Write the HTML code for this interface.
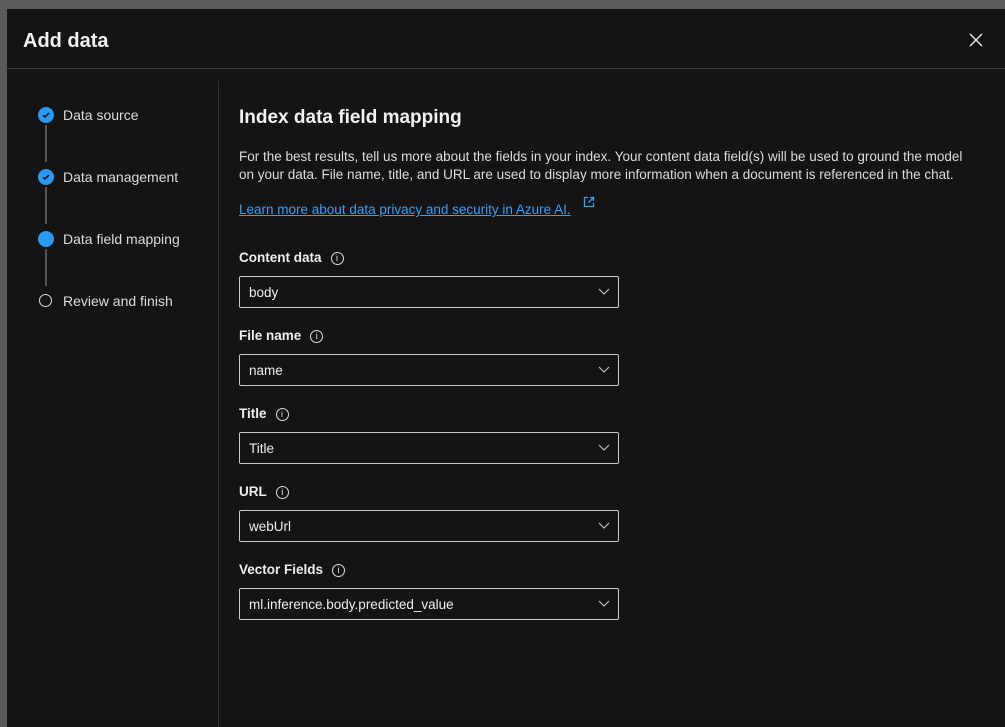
<!DOCTYPE html>
<html><head><meta charset="utf-8"><style>
*{box-sizing:border-box;margin:0;padding:0}
html,body{width:1005px;height:727px;overflow:hidden}
body{background:#5a5a5a;font-family:"Liberation Sans",sans-serif;color:#e6e6e6;position:relative}
.top{position:absolute;left:0;top:0;width:1005px;height:9px;background:#5c5c5c}
.modal{position:absolute;left:7px;top:9px;width:998px;height:730px;background:#141414}
.abs{position:absolute}
.title{left:16px;top:21px;font-size:20px;font-weight:bold;color:#f2f2f2}
.hdiv{left:0;top:59px;width:998px;height:1px;background:#3b3b3b}
.vdiv{left:211px;top:72px;width:1px;height:660px;background:#333}
.step{font-size:14px;color:#dcdcdc;left:56px}
.circ{width:16px;height:16px;border-radius:50%;background:#2899f5;left:31px}
.line{left:38px;width:2px;background:#555;height:37px}
.h2{left:232px;top:98px;font-size:19px;font-weight:bold;color:#f2f2f2}
.p{left:232px;top:139px;font-size:13.5px;line-height:18px;color:#dcdcdc;width:735px}
.link{left:232px;top:193px;font-size:13.5px;color:#3a9ff0;text-decoration:underline}
.lbl{left:232px;font-size:13.5px;font-weight:bold;color:#eee}
.info{display:inline-block;width:13px;height:13px;border:1px solid #ddd;border-radius:50%;font-size:9px;text-align:center;line-height:11px;font-weight:normal;margin-left:9px;vertical-align:1px}
.box{left:232px;width:380px;height:32px;border:1px solid #c8c8c8;border-radius:2px;font-size:13.5px;padding-left:9px;line-height:31px;color:#eee}
.box svg{position:absolute;right:8px;top:11px}
</style></head><body>
<div class="top"></div>
<div class="modal">
<div class="abs title">Add data</div>
<svg class="abs" style="left:962px;top:24px" width="14" height="14"><path d="M1 1L13 13M13 1L1 13" stroke="#eee" stroke-width="1.4"/></svg>
<div class="abs hdiv"></div>
<div class="abs vdiv"></div>

<div class="abs circ" style="top:98px"><svg width="16" height="16"><path d="M5 8.2L7 10L11 6" stroke="#111" stroke-width="1.5" fill="none"/></svg></div>
<div class="abs step" style="top:98px">Data source</div>
<div class="abs line" style="top:116px"></div>
<div class="abs circ" style="top:160px"><svg width="16" height="16"><path d="M5 8.2L7 10L11 6" stroke="#111" stroke-width="1.5" fill="none"/></svg></div>
<div class="abs step" style="top:160px">Data management</div>
<div class="abs line" style="top:178px"></div>
<div class="abs circ" style="top:222px"></div>
<div class="abs step" style="top:222px">Data field mapping</div>
<div class="abs line" style="top:240px"></div>
<div class="abs circ" style="top:285px;width:13px;height:13px;left:32px;background:none;border:1.5px solid #ddd"></div>
<div class="abs step" style="top:284px">Review and finish</div>

<div class="abs h2">Index data field mapping</div>
<div class="abs p">For the best results, tell us more about the fields in your index. Your content data field(s) will be used to ground the model on your data. File name, title, and URL are used to display more information when a document is referenced in the chat.</div>
<div class="abs link">Learn more about data privacy and security in Azure AI.</div>
<svg class="abs" style="left:576px;top:187px" width="12" height="12"><path d="M5 1.5H1.5V10.5H10.5V7M7 1.5H10.5V5M10.5 1.5L5.5 6.5" stroke="#3a9ff0" stroke-width="1.3" fill="none"/></svg>

<div class="abs lbl" style="top:241px">Content data<span class="info">i</span></div>
<div class="abs box" style="top:267px">body<svg width="12" height="8"><path d="M1 1L6 6L11 1" stroke="#bbb" stroke-width="1.2" fill="none"/></svg></div>
<div class="abs lbl" style="top:319px">File name<span class="info">i</span></div>
<div class="abs box" style="top:345px">name<svg width="12" height="8"><path d="M1 1L6 6L11 1" stroke="#bbb" stroke-width="1.2" fill="none"/></svg></div>
<div class="abs lbl" style="top:397px">Title<span class="info">i</span></div>
<div class="abs box" style="top:423px">Title<svg width="12" height="8"><path d="M1 1L6 6L11 1" stroke="#bbb" stroke-width="1.2" fill="none"/></svg></div>
<div class="abs lbl" style="top:475px">URL<span class="info">i</span></div>
<div class="abs box" style="top:501px">webUrl<svg width="12" height="8"><path d="M1 1L6 6L11 1" stroke="#bbb" stroke-width="1.2" fill="none"/></svg></div>
<div class="abs lbl" style="top:553px">Vector Fields<span class="info">i</span></div>
<div class="abs box" style="top:579px">ml.inference.body.predicted_value<svg width="12" height="8"><path d="M1 1L6 6L11 1" stroke="#bbb" stroke-width="1.2" fill="none"/></svg></div>
</div>
</body></html>
